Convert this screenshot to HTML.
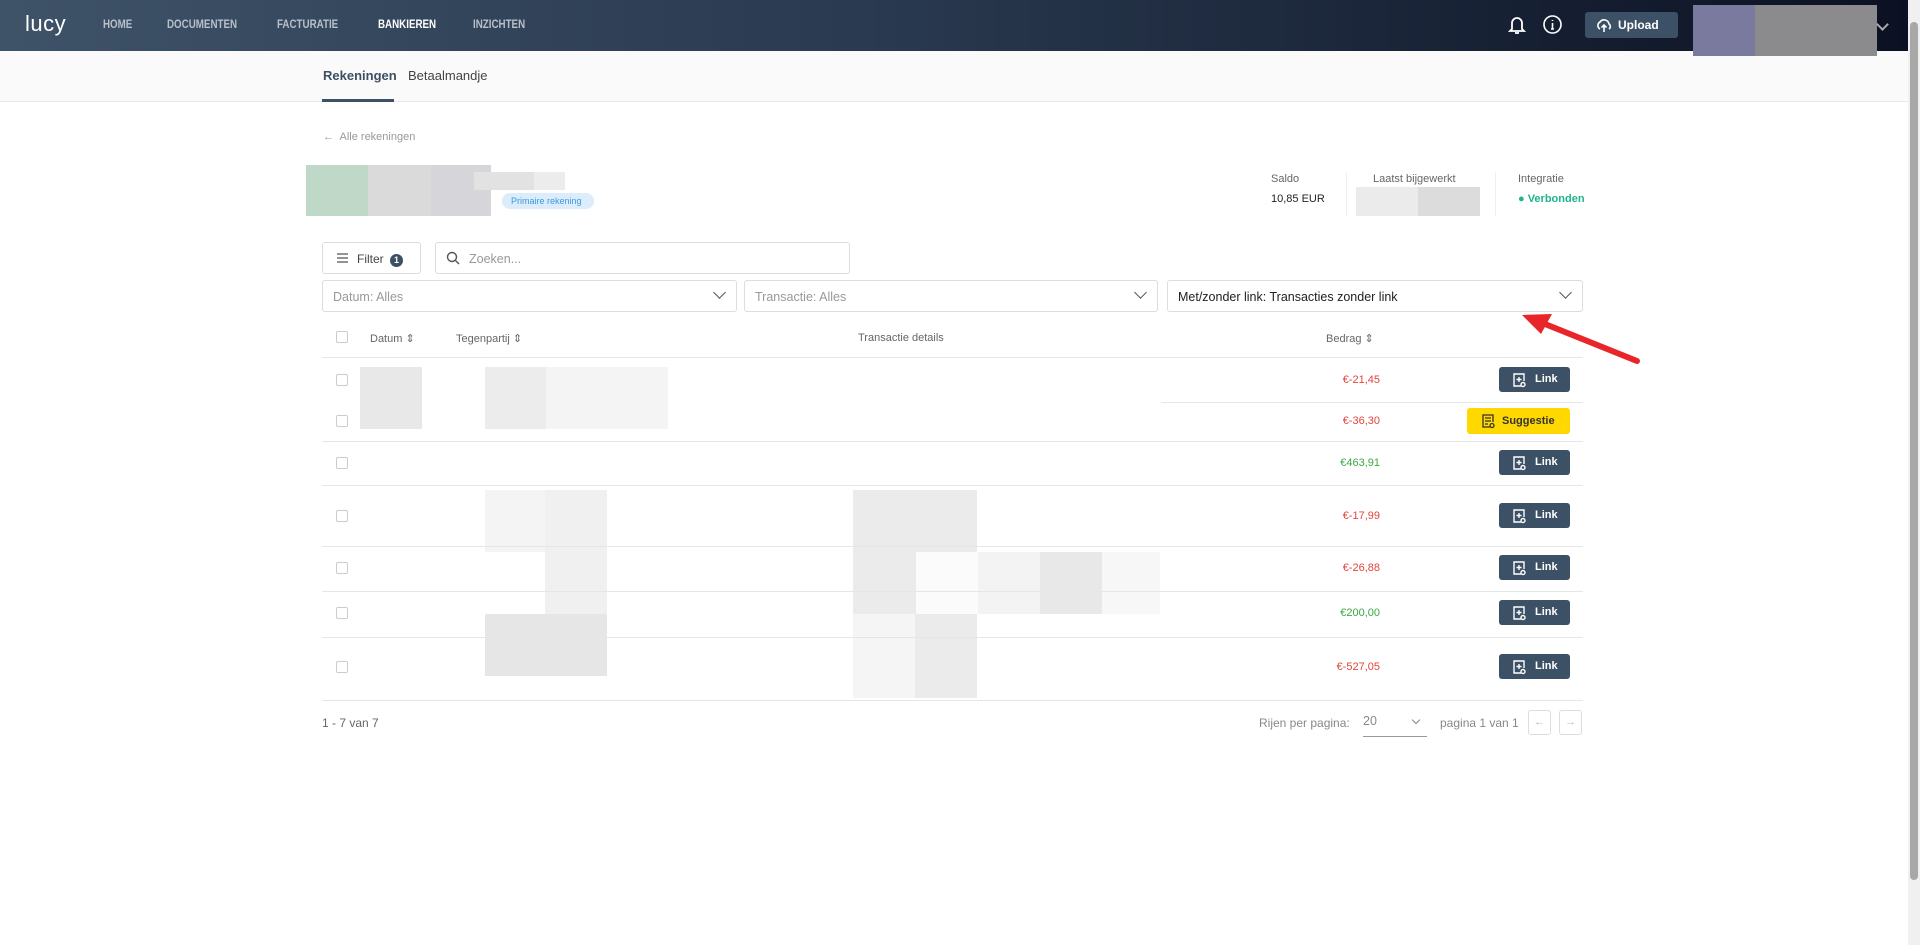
<!DOCTYPE html>
<html><head><meta charset="utf-8"><style>
*{box-sizing:border-box;margin:0;padding:0}
body{width:1920px;height:945px;overflow:hidden;background:#fff;font-family:"Liberation Sans",sans-serif;color:#333;position:relative}
.a{position:absolute}
.hdr{left:0;top:0;width:1908px;height:51px;background:linear-gradient(90deg,#3e5268 0%,#2a3a50 45%,#0b1122 100%)}
.nav{top:19px;font-size:11.5px;font-weight:bold;color:#b8c0cc;transform:scaleX(.85);transform-origin:left}
.sub{left:0;top:51px;width:1908px;height:51px;background:#fafafa;border-bottom:1px solid #eaeaea}
.g{color:#999;font-size:12px}
.box{border:1px solid #ddd;border-radius:3px;background:#fff}
.dd{height:32px;top:280px;font-size:12.5px;color:#999;padding:9px 10px}
.chev{position:absolute;right:12px;width:9px;height:9px;border-right:1.5px solid #555;border-bottom:1.5px solid #555;transform:rotate(45deg);top:7px}
.th{top:332px;font-size:11px;color:#666}
.line{left:322px;width:1261px;height:1px;background:#e6e6e6}
.cb{left:336px;width:12px;height:12px;border:1px solid #ccc;border-radius:2px}
.amt{right:540px;font-size:11px;text-align:right}
.red{color:#e0453a}.grn{color:#3aa845}
.btn{left:1499px;width:71px;height:25px;background:#3d5166;border-radius:3px;color:#fff;font-size:11px;font-weight:bold;padding:6px 0 0 36px}
.bl{background:#e8e8e8}
</style></head><body>
<div class="a hdr"></div>
<div class="a sub"></div>
<div class="a" style="left:25px;top:11px;font-size:22px;color:#fff;letter-spacing:.5px">lucy</div>
<div class="a nav" style="left:103px">HOME</div>
<div class="a nav" style="left:167px">DOCUMENTEN</div>
<div class="a nav" style="left:277px">FACTURATIE</div>
<div class="a nav" style="left:378px;color:#fff">BANKIEREN</div>
<div class="a nav" style="left:473px">INZICHTEN</div>
<svg class="a" style="left:1508px;top:15px" width="18" height="20" viewBox="0 0 18 20" fill="none" stroke="#fff" stroke-width="1.8"><path d="M4 14V8a5 5 0 0 1 10 0v6l2 2H2z"/><path d="M7 18h4"/></svg>
<svg class="a" style="left:1542px;top:14px" width="21" height="21" viewBox="0 0 21 21" fill="none" stroke="#fff" stroke-width="1.6"><circle cx="10.5" cy="10.5" r="8.5"/><path d="M10.5 9v6M9 15h3M10.5 6v1"/></svg>
<div class="a" style="left:1585px;top:12px;width:93px;height:26px;background:#3d5166;border-radius:3px;color:#fff;font-size:12px;font-weight:bold;padding:6px 0 0 33px">Upload</div>
<svg class="a" style="left:1596px;top:17px" width="16" height="16" viewBox="0 0 16 16" fill="none" stroke="#fff" stroke-width="1.6"><path d="M4 12a4 4 0 0 1 0-7 5 5 0 0 1 9 2 3 3 0 0 1 0 5"/><path d="M8 15V8M5.5 10.5 8 8l2.5 2.5"/></svg>
<div class="a" style="left:1693px;top:5px;width:62px;height:51px;background:#7a7a9e"></div>
<div class="a" style="left:1755px;top:5px;width:122px;height:51px;background:#8b8b8d"></div>
<div class="a" style="left:1878px;top:20px;width:9px;height:9px;border-right:2px solid #aaa;border-bottom:2px solid #aaa;transform:rotate(45deg)"></div>
<div class="a" style="left:1908px;top:0;width:12px;height:945px;background:#f0f0f0"></div>
<div class="a" style="left:1910px;top:22px;width:8px;height:858px;background:#a8a8a8;border-radius:4px"></div>

<div class="a" style="left:323px;top:68px;font-size:13px;font-weight:bold;color:#3d4f63">Rekeningen</div>
<div class="a" style="left:408px;top:68px;font-size:13px;color:#444">Betaalmandje</div>
<div class="a" style="left:322px;top:99px;width:72px;height:3px;background:#3d5166"></div>

<div class="a g" style="left:323px;top:131px;font-size:11px">←&nbsp; Alle rekeningen</div>
<div class="a" style="left:306px;top:165px;width:62px;height:51px;background:#bfd8c8"></div>
<div class="a" style="left:368px;top:165px;width:63px;height:51px;background:#dadada"></div>
<div class="a" style="left:431px;top:165px;width:60px;height:51px;background:#d6d6da"></div>
<div class="a" style="left:474px;top:172px;width:60px;height:18px;background:#e2e2e2"></div>
<div class="a" style="left:534px;top:172px;width:31px;height:18px;background:#ececec"></div>
<div class="a" style="left:502px;top:193px;width:92px;height:16px;background:#dcecfb;border-radius:8px;color:#3a9ae0;font-size:9px;padding:3px 0 0 9px">Primaire rekening</div>

<div class="a" style="left:1271px;top:173px;font-size:11px;color:#666">Saldo</div>
<div class="a" style="left:1271px;top:193px;font-size:11px;color:#222">10,85 EUR</div>
<div class="a" style="left:1346px;top:172px;width:1px;height:44px;background:#eee"></div>
<div class="a" style="left:1373px;top:173px;font-size:11px;color:#666">Laatst bijgewerkt</div>
<div class="a" style="left:1356px;top:187px;width:62px;height:29px;background:#ebebeb"></div>
<div class="a" style="left:1418px;top:187px;width:62px;height:29px;background:#dcdcdc"></div>
<div class="a" style="left:1495px;top:172px;width:1px;height:44px;background:#eee"></div>
<div class="a" style="left:1518px;top:173px;font-size:11px;color:#666">Integratie</div>
<div class="a" style="left:1518px;top:193px;font-size:11px;color:#1fb48a;font-weight:bold">● Verbonden</div>

<div class="a box" style="left:322px;top:242px;width:99px;height:32px;font-size:12px;color:#444;padding:9px 0 0 34px">Filter <span style="display:inline-block;width:13px;height:13px;border-radius:50%;background:#3d4f63;color:#fff;font-size:9px;text-align:center;line-height:13px;font-weight:bold;margin-left:3px">1</span></div>
<svg class="a" style="left:336px;top:252px" width="13" height="12" viewBox="0 0 13 12" stroke="#555" stroke-width="1.2"><path d="M1 2h11M1 6h11M1 10h11"/></svg>
<div class="a box" style="left:435px;top:242px;width:415px;height:32px;font-size:12.5px;color:#999;padding:9px 0 0 33px">Zoeken...</div>
<svg class="a" style="left:446px;top:251px" width="14" height="14" viewBox="0 0 14 14" fill="none" stroke="#555" stroke-width="1.4"><circle cx="6" cy="6" r="4.5"/><path d="M9.5 9.5 13 13"/></svg>
<div class="a box dd" style="left:322px;width:415px">Datum: Alles<span class="chev"></span></div>
<div class="a box dd" style="left:744px;width:414px">Transactie: Alles<span class="chev"></span></div>
<div class="a box dd" style="left:1167px;width:416px;color:#222">Met/zonder link: Transacties zonder link<span class="chev"></span></div>

<div class="a cb" style="top:331px"></div>
<div class="a th" style="left:370px">Datum ⇕</div>
<div class="a th" style="left:456px">Tegenpartij ⇕</div>
<div class="a th" style="left:858px">Transactie details</div>
<div class="a th" style="left:1326px">Bedrag ⇕</div>
<div class="a line" style="top:357px"></div>

<div class="a bl" style="left:360px;top:367px;width:62px;height:62px"></div>
<div class="a" style="left:485px;top:367px;width:61px;height:62px;background:#ececec"></div>
<div class="a" style="left:546px;top:367px;width:122px;height:62px;background:#f4f4f4"></div>
<div class="a" style="left:485px;top:490px;width:122px;height:62px;background:#f4f4f4"></div>
<div class="a" style="left:545px;top:490px;width:62px;height:124px;background:#f0f0f0"></div>
<div class="a" style="left:853px;top:490px;width:124px;height:124px;background:#ebebeb"></div>
<div class="a" style="left:916px;top:552px;width:62px;height:62px;background:#fbfbfb"></div>
<div class="a" style="left:978px;top:552px;width:62px;height:62px;background:#f3f3f3"></div>
<div class="a" style="left:1040px;top:552px;width:62px;height:62px;background:#e8e8e8"></div>
<div class="a" style="left:1102px;top:552px;width:58px;height:62px;background:#f7f7f7"></div>
<div class="a" style="left:485px;top:614px;width:122px;height:62px;background:#e6e6e6"></div>
<div class="a" style="left:853px;top:614px;width:62px;height:84px;background:#f5f5f5"></div>
<div class="a" style="left:915px;top:614px;width:62px;height:84px;background:#ebebeb"></div>

<div class="a line" style="top:402px;left:1161px;width:422px"></div>
<div class="a line" style="top:441px"></div>
<div class="a line" style="top:485px"></div>
<div class="a line" style="top:546px"></div>
<div class="a line" style="top:591px"></div>
<div class="a line" style="top:637px"></div>
<div class="a line" style="top:700px"></div>

<div class="a cb" style="top:374px"></div><div class="a amt red" style="top:374px">€-21,45</div><div class="a btn" style="top:367px">Link</div>
<div class="a cb" style="top:415px"></div><div class="a amt red" style="top:415px">€-36,30</div>
<div class="a" style="left:1467px;top:408px;width:103px;height:26px;background:#ffd800;border-radius:3px;color:#333;font-size:11px;font-weight:bold;padding:7px 0 0 35px">Suggestie</div>
<div class="a cb" style="top:457px"></div><div class="a amt grn" style="top:457px">€463,91</div><div class="a btn" style="top:450px">Link</div>
<div class="a cb" style="top:510px"></div><div class="a amt red" style="top:510px">€-17,99</div><div class="a btn" style="top:503px">Link</div>
<div class="a cb" style="top:562px"></div><div class="a amt red" style="top:562px">€-26,88</div><div class="a btn" style="top:555px">Link</div>
<div class="a cb" style="top:607px"></div><div class="a amt grn" style="top:607px">€200,00</div><div class="a btn" style="top:600px">Link</div>
<div class="a cb" style="top:661px"></div><div class="a amt red" style="top:661px">€-527,05</div><div class="a btn" style="top:654px">Link</div>
<svg width="0" height="0" style="position:absolute"><defs><g id="li" fill="none" stroke="#fff" stroke-width="1.4"><path d="M9 14H2V2h10v7"/><path d="M7 5v5M4.5 7.5h5"/><circle cx="11" cy="12.5" r="2"/></g></defs></svg>
<svg class="a" style="left:1512px;top:372px" width="15" height="16"><use href="#li"/></svg>
<svg class="a" style="left:1512px;top:455px" width="15" height="16"><use href="#li"/></svg>
<svg class="a" style="left:1512px;top:508px" width="15" height="16"><use href="#li"/></svg>
<svg class="a" style="left:1512px;top:560px" width="15" height="16"><use href="#li"/></svg>
<svg class="a" style="left:1512px;top:605px" width="15" height="16"><use href="#li"/></svg>
<svg class="a" style="left:1512px;top:659px" width="15" height="16"><use href="#li"/></svg>
<svg class="a" style="left:1481px;top:413px" width="15" height="16" viewBox="0 0 15 16" fill="none" stroke="#333" stroke-width="1.3"><path d="M9 14H2V2h10v7M4 5h6M4 8h6M4 11h3"/><circle cx="11" cy="12.5" r="2"/></svg>

<div class="a" style="left:322px;top:716px;font-size:12px;color:#666">1 - 7 van 7</div>
<div class="a" style="left:1259px;top:716px;font-size:12px;color:#888">Rijen per pagina:</div>
<div class="a" style="left:1363px;top:714px;font-size:12.5px;color:#888">20</div>
<div class="a" style="left:1363px;top:736px;width:64px;height:1px;background:#999"></div>
<div class="a" style="left:1413px;top:717px;width:6px;height:6px;border-right:1.5px solid #888;border-bottom:1.5px solid #888;transform:rotate(45deg)"></div>
<div class="a" style="left:1440px;top:716px;font-size:12px;color:#888">pagina 1 van 1</div>
<div class="a box" style="left:1528px;top:710px;width:23px;height:25px;color:#bbb;font-size:11px;text-align:center;line-height:23px">←</div>
<div class="a box" style="left:1559px;top:710px;width:23px;height:25px;color:#bbb;font-size:11px;text-align:center;line-height:23px">→</div>

<svg class="a" style="left:1515px;top:305px" width="135" height="65" viewBox="1515 305 135 65"><path d="M1637 361 1540 322" stroke="#e8262a" stroke-width="6" stroke-linecap="round"/><path d="M1522 315l30-1-11 20z" fill="#e8262a"/></svg>
</body></html>
